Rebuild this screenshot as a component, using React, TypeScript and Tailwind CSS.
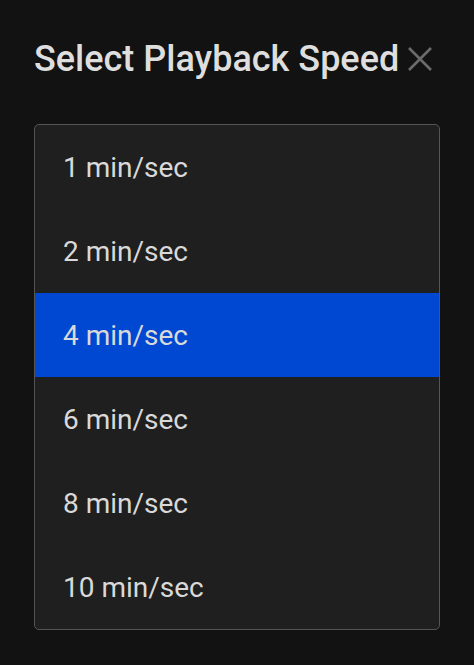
const speeds = [1, 2, 4, 6, 8, 10];

export default function App() {
  const selected = 4;

  return (
    <div className="min-h-[665px] w-full bg-[#121212] pl-[34px] pr-[34px] pt-[36px] font-['Roboto',sans-serif]">
      <div className="flex items-center gap-[9px]">
        <h2 className="text-[36px] font-medium leading-[46px] text-[#dedede]">Select Playback Speed</h2>
        <button className="flex h-[24px] w-[24px] items-center justify-center">
          <svg width="24" height="24" viewBox="0 0 24 24" fill="none">
            <path d="M1 1L23 23M23 1L1 23" stroke="#6b6b6b" strokeWidth="2.6" />
          </svg>
        </button>
      </div>
      <ul className="mt-[42px] w-[406px] overflow-hidden rounded-[5px] border border-[#555555] bg-[#1f1f1f]">
        {speeds.map((s) => (
          <li
            key={s}
            className={`flex h-[84px] items-center pl-[28px] pt-[1px] text-[28px] text-[#d9d9d9] ${
              s === selected ? 'bg-[#0047d1]' : ''
            }`}
          >
            {s} min/sec
          </li>
        ))}
      </ul>
    </div>
  );
}
